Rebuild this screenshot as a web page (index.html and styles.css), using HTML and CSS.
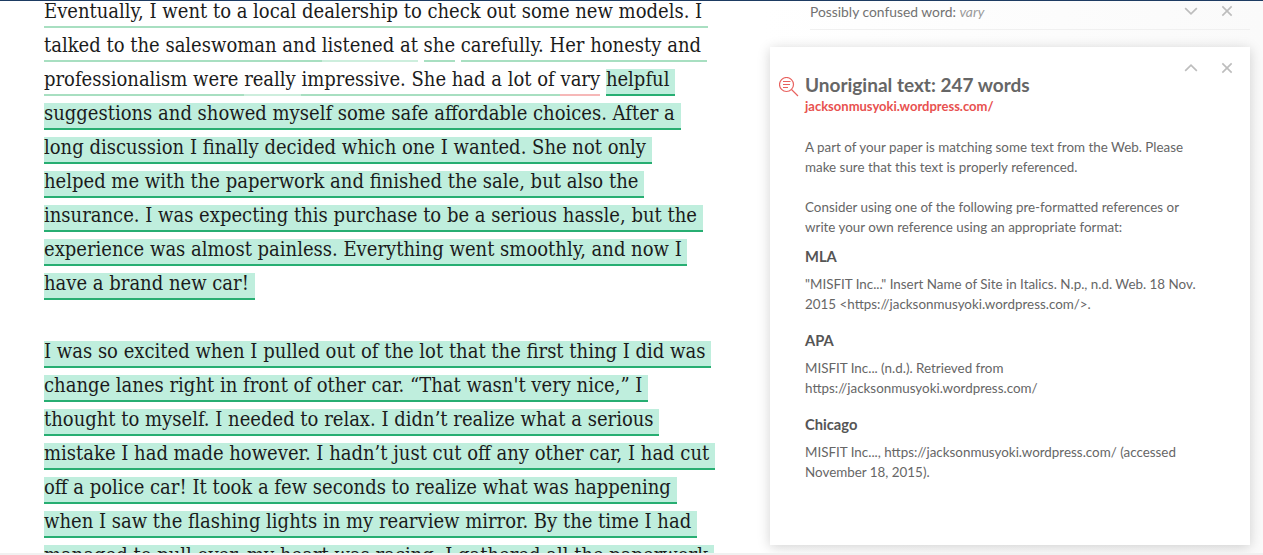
FILE: index.html
```html
<!DOCTYPE html>
<html lang="en">
<head>
<meta charset="utf-8">
<title>Unoriginal text</title>
<link rel="stylesheet" href="styles.css">
</head>
<body>
<div class="page">
  <main class="doc">
    <div class="line"><span class="seg soft">Eventually, I went to a local dealership to check out some new models. I&nbsp;</span></div>
    <div class="line"><span class="seg soft">talked to the saleswoman and </span><span class="seg pale">listened at</span><span class="gap"> </span><span class="seg soft">she</span><span class="gap"> </span><span class="seg soft">carefully. Her honesty and&nbsp;</span></div>
    <div class="line"><span class="seg soft">professionalism were </span><span class="seg pale">really </span><span class="seg soft">impressive. She had a lot of </span><span class="seg pink">vary</span><span class="gap"> </span><span class="seg hit">helpful&nbsp;</span></div>
    <div class="line"><span class="seg hit">suggestions and showed myself some safe affordable choices. After a&nbsp;</span></div>
    <div class="line"><span class="seg hit">long discussion I finally decided which one I wanted. She not only&nbsp;</span></div>
    <div class="line"><span class="seg hit">helped me with the paperwork and finished the sale, but also the&nbsp;</span></div>
    <div class="line"><span class="seg hit">insurance. I was expecting this purchase to be a serious hassle, but the&nbsp;</span></div>
    <div class="line"><span class="seg hit">experience was almost painless. Everything went smoothly, and now I&nbsp;</span></div>
    <div class="line"><span class="seg hit">have a brand new car!&nbsp;</span></div>
    <div class="line"></div>
    <div class="line"><span class="seg hit">I was so excited when I pulled out of the lot that the first thing I did was&nbsp;</span></div>
    <div class="line"><span class="seg hit">change lanes right in front of other car. “That wasn't very nice,” I&nbsp;</span></div>
    <div class="line"><span class="seg hit">thought to myself. I needed to relax. I didn’t realize what a serious&nbsp;</span></div>
    <div class="line"><span class="seg hit">mistake I had made however. I hadn’t just cut off any other car, I had cut&nbsp;</span></div>
    <div class="line"><span class="seg hit">off a police car! It took a few seconds to realize what was happening&nbsp;</span></div>
    <div class="line"><span class="seg hit">when I saw the flashing lights in my rearview mirror. By the time I had&nbsp;</span></div>
    <div class="line"><span class="seg hit">managed to pull over, my heart was racing. I gathered all the paperwork&nbsp;</span></div>
  </main>
  <aside class="side">
    <div class="mini">
      <p class="mini-title">Possibly confused word: <em>vary</em></p>
      <div class="controls">
        <svg class="ctl" viewBox="0 0 12 12"><path d="M1 3.5l5 5 5-5"/></svg>
        <svg class="ctl" viewBox="0 0 12 12"><path d="M2 2l8 8M10 2l-8 8"/></svg>
      </div>
    </div>
    <section class="card">
      <div class="controls card-controls">
        <svg class="ctl" viewBox="0 0 12 12"><path d="M1 8.5l5-5 5 5"/></svg>
        <svg class="ctl" viewBox="0 0 12 12"><path d="M2 2l8 8M10 2l-8 8"/></svg>
      </div>
      <header class="card-head">
        <svg class="plag" viewBox="0 0 20 20"><circle cx="7.5" cy="7.5" r="7"/><path d="M4 4.5h7.5M4 7.5h7M4 10.5h5M12.5 12.5l6.5 6.5"/></svg>
        <div>
          <h1>Unoriginal text: 247 words</h1>
          <a class="src">jacksonmusyoki.wordpress.com/</a>
        </div>
      </header>
      <p class="para">A part of your paper is matching some text from the Web. Please<br>make sure that this text is properly referenced.</p>
      <p class="para">Consider using one of the following pre-formatted references or<br>write your own reference using an appropriate format:</p>
      <h2>MLA</h2>
      <p class="para ref">"MISFIT Inc..." Insert Name of Site in Italics. N.p., n.d. Web. 18 Nov.<br>2015 &lt;https://jacksonmusyoki.wordpress.com/&gt;.</p>
      <h2>APA</h2>
      <p class="para ref">MISFIT Inc... (n.d.). Retrieved from<br>https://jacksonmusyoki.wordpress.com/</p>
      <h2>Chicago</h2>
      <p class="para ref">MISFIT Inc..., https://jacksonmusyoki.wordpress.com/ (accessed<br>November 18, 2015).</p>
    </section>
  </aside>
</div>
</body>
</html>
```
FILE: styles.css
```css
* { box-sizing: border-box; }
html, body { margin: 0; height: 555px; overflow: hidden; background: #fff; }
.page {
  display: flex;
  height: 555px;
  overflow: hidden;
  border-top: 1px solid #1d3b62;
  border-bottom: 2px solid #f1f1f1;
}
.doc {
  width: 760px;
  flex: none;
  padding-left: 44px;
  font-family: "DejaVu Serif Condensed", "DejaVu Serif", serif;
  font-stretch: condensed;
  font-size: 20px;
  color: #1b1b1b;
}
.line { height: 34px; white-space: nowrap; display: flex; align-items: flex-start; }
.seg { display: inline-block; height: 27px; line-height: 21px; white-space: pre; border-bottom: 2px solid transparent; }
.gap { white-space: pre; display: inline-block; height: 27px; line-height: 21px; }
.soft { border-bottom-color: #a8dfc1; }
.pale { border-bottom-color: #cdeedd; }
.pink { border-bottom-color: #f6b8b8; }
.hit { background: #bfeedd; border-bottom-color: #27ae72; }
.side {
  flex: 1;
  padding-left: 10px;
  padding-right: 13px;
  background: linear-gradient(90deg, #fff 0, #fafafa 100%);
  font-family: Lato, sans-serif;
  color: #5f5f5f;
}
.mini {
  display: flex;
  justify-content: space-between;
  height: 29px;
  margin-left: 40px;
  border-bottom: 1px solid #f0f0f0;
}
.mini-title { margin: 2px 0 0; font-size: 13.85px; line-height: 18px; color: #727272; }
.mini-title em { color: #9a9a9a; }
.controls { display: flex; gap: 22px; padding-right: 16px; padding-top: 3px; }
.ctl { width: 14px; height: 14px; fill: none; stroke: #bdbdbd; stroke-width: 1.4; }
.card {
  position: relative;
  margin-top: 17px;
  height: 498px;
  padding: 26px 20px 0 9px;
  background: #fff;
  box-shadow: 0 2px 12px rgba(0,0,0,.18);
}
.card-controls { position: absolute; top: 11px; right: 0; }
.card-head { display: flex; gap: 6px; }
.plag { width: 20px; height: 20px; margin-top: 4px; flex: none; fill: none; stroke: #e8625f; stroke-width: 1.2; }
h1 { margin: 0; font-size: 19px; line-height: 24px; font-weight: 700; color: #666; }
.src { display: block; font-size: 13px; line-height: 18px; font-weight: 700; color: #e8514f; }
.para { margin: 22px 0 0 26px; font-size: 13.4px; line-height: 20px; color: #666; }
.para + .para { margin-top: 20px; }
h2 { margin: 9px 0 0 26px; font-size: 14.7px; line-height: 20px; font-weight: 700; color: #555; }
.ref { margin-top: 8px; }
.para.ref + h2 { margin-top: 16px; }
```
